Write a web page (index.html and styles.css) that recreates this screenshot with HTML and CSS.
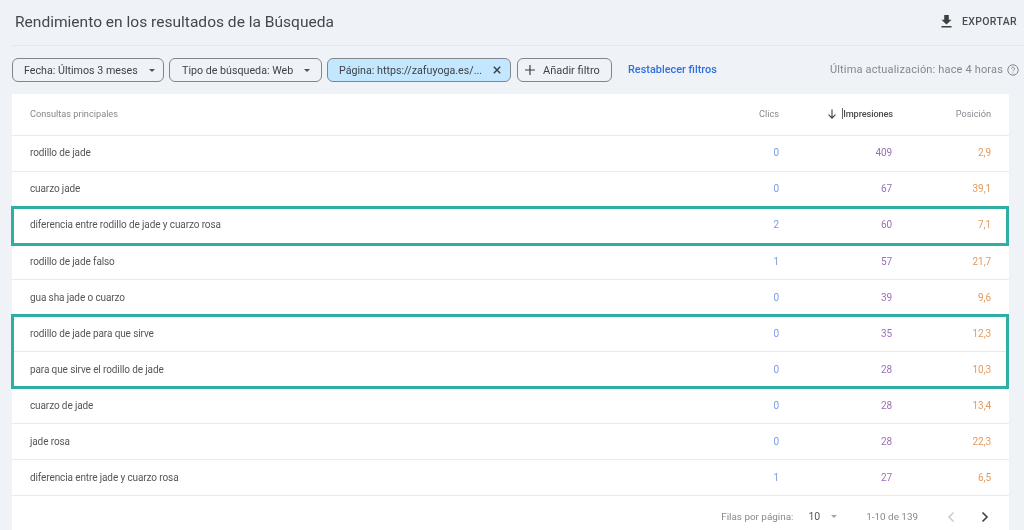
FILE: index.html
```html
<!DOCTYPE html>
<html lang="es">
<head>
<meta charset="utf-8">
<title>Rendimiento en los resultados de la Búsqueda</title>
<link rel="stylesheet" href="styles.css">
</head>
<body>
<div class="page">
<header class="topbar">
  <h1 class="title">Rendimiento en los resultados de la Búsqueda</h1>
  <div class="export">
    <svg class="export-icon" viewBox="0 0 12 14" width="11" height="13"><path d="M3.500 0h5v5h3L6 10.300.5 5h3zM.5 12h11v1.500H.5z" fill="#3c4043"/></svg>
    <span>EXPORTAR</span>
  </div>
</header>
<section class="filters">
  <div class="chip chip-fecha">Fecha: Últimos 3 meses<span class="caret"></span></div>
  <div class="chip chip-tipo">Tipo de búsqueda: Web<span class="caret"></span></div>
  <div class="chip chip-active">Página: https://zafuyoga.es/...
    <svg class="close" viewBox="0 0 10 10" width="8" height="8"><path d="M1 1l8 8M9 1l-8 8" stroke="#3c4043" stroke-width="1.800" fill="none"/></svg>
  </div>
  <div class="chip chip-add">
    <svg viewBox="0 0 10 10" width="10" height="10"><path d="M5 0v10M0 5h10" stroke="#3c4043" stroke-width="1.200" fill="none"/></svg>
    Añadir filtro
  </div>
  <a class="reset">Restablecer filtros</a>
  <div class="updated">Última actualización: hace 4 horas
    <svg viewBox="0 0 12 12" width="12" height="12"><circle cx="6" cy="6" r="5.200" fill="none" stroke="#80868b" stroke-width="1"/><path d="M4.500 4.700a1.500 1.500 0 1 1 2.300 1.300c-.6.400-.8.700-.8 1.300" fill="none" stroke="#80868b" stroke-width="1"/><circle cx="6" cy="9" r=".6" fill="#80868b"/></svg>
  </div>
</section>
<main class="card">
  <div class="row head">
    <div class="cell-q">Consultas principales</div>
    <div class="num">Clics</div>
    <div class="num sorted"><svg viewBox="0 0 8 10" width="8" height="10"><path d="M4 .5v8.500M.6 5.600L4 9.100l3.400-3.500" stroke="#3c4043" stroke-width="1.100" fill="none"/></svg><span class="caret-line">Impresiones</span></div>
    <div class="num">Posición</div>
  </div>
  <div class="row"><div class="cell-q">rodillo de jade</div><div class="num c">0</div><div class="num i">409</div><div class="num p">2,9</div></div>
  <div class="row"><div class="cell-q">cuarzo jade</div><div class="num c">0</div><div class="num i">67</div><div class="num p">39,1</div></div>
  <div class="row"><div class="cell-q">diferencia entre rodillo de jade y cuarzo rosa</div><div class="num c">2</div><div class="num i">60</div><div class="num p">7,1</div></div>
  <div class="row"><div class="cell-q">rodillo de jade falso</div><div class="num c">1</div><div class="num i">57</div><div class="num p">21,7</div></div>
  <div class="row"><div class="cell-q">gua sha jade o cuarzo</div><div class="num c">0</div><div class="num i">39</div><div class="num p">9,6</div></div>
  <div class="row"><div class="cell-q">rodillo de jade para que sirve</div><div class="num c">0</div><div class="num i">35</div><div class="num p">12,3</div></div>
  <div class="row"><div class="cell-q">para que sirve el rodillo de jade</div><div class="num c">0</div><div class="num i">28</div><div class="num p">10,3</div></div>
  <div class="row"><div class="cell-q">cuarzo de jade</div><div class="num c">0</div><div class="num i">28</div><div class="num p">13,4</div></div>
  <div class="row"><div class="cell-q">jade rosa</div><div class="num c">0</div><div class="num i">28</div><div class="num p">22,3</div></div>
  <div class="row"><div class="cell-q">diferencia entre jade y cuarzo rosa</div><div class="num c">1</div><div class="num i">27</div><div class="num p">6,5</div></div>
  <footer class="pager">
    <span>Filas por página:</span>
    <span class="size">10</span>
    <span class="caret caret-light"></span>
    <span class="range">1-10 de 139</span>
    <svg class="prev" viewBox="0 0 8 12" width="8" height="12"><path d="M6.500 1.500L2 6l4.500 4.500" stroke="#c4c7ca" stroke-width="1.400" fill="none"/></svg>
    <svg class="next" viewBox="0 0 8 12" width="8" height="12"><path d="M1.500 1.500L6 6l-4.500 4.500" stroke="#3c4043" stroke-width="1.600" fill="none"/></svg>
  </footer>
</main>
<div class="mark mark-one"></div>
<div class="mark mark-two"></div>
</div>
</body>
</html>
```
FILE: styles.css
```css
* { box-sizing: border-box; }
html, body { margin: 0; height: 530px; overflow: hidden; }
body {
  background: #eff3f8;
  font-family: Roboto, "Liberation Sans", sans-serif;
  color: #3c4043;
}
.page {
  position: relative;
  height: 530px;
  filter: blur(.3px);
}
.topbar {
  height: 46px;
  margin-left: 12px;
  padding: 0 7px 2px 3px;
  display: flex;
  align-items: center;
  justify-content: space-between;
  border-bottom: 1px solid #e4e7eb;
}
.title {
  margin: 0;
  font-size: 15.550px;
  font-weight: 400;
  color: #44484c;
}
.export {
  display: flex;
  align-items: center;
  gap: 10px;
  font-size: 10.500px;
  font-weight: 500;
  letter-spacing: .35px;
  color: #4a4d50;
}
.filters {
  height: 48px;
  padding: 12px 5px 0 12px;
  display: flex;
  align-items: flex-start;
  font-size: 10.700px;
  font-weight: 400;
  color: #3f4347;
}
.chip {
  height: 24px;
  border: 1px solid #80868b;
  border-radius: 6px;
  display: flex;
  align-items: center;
  white-space: nowrap;
}
.chip-fecha { width: 152px; padding-left: 11px; margin-right: 5px; }
.chip-tipo { width: 153px; padding-left: 12px; margin-right: 5px; }
.chip-active {
  width: 184px;
  padding-left: 11px;
  margin-right: 6px;
  background: #c2e7ff;
  justify-content: space-between;
  padding-right: 9px;
}
.chip-add {
  width: 95px;
  padding-left: 7px;
  gap: 8px;
  margin-right: 16px;
  font-size: 11px;
}
.caret {
  width: 0;
  height: 0;
  margin-left: 11px;
  border-left: 3px solid transparent;
  border-right: 3px solid transparent;
  border-top: 3px solid #4f5357;
}
.reset {
  line-height: 24px;
  color: #2f6fe0;
  font-weight: 500;
  font-size: 10.900px;
}
.updated {
  margin-left: auto;
  line-height: 24px;
  display: flex;
  align-items: center;
  gap: 4px;
  font-size: 11px;
  font-weight: 400;
  letter-spacing: .16px;
  color: #85898d;
}
.card {
  width: 997px;
  height: 436px;
  margin-left: 12px;
  background: #fff;
  font-size: 10px;
  letter-spacing: -.11px;
}
.row {
  height: 36.100px;
  display: grid;
  grid-template-columns: 1fr 90px 113px 99px;
  padding: 0 18px .6px;
  align-items: center;
  border-bottom: 1px solid #e8eaed;
  color: #53575b;
}
.head {
  height: 41.500px;
  padding-bottom: 1px;
  font-size: 9.200px;
  letter-spacing: 0;
  color: #85898d;
}
.num { text-align: right; }
.sorted {
  font-size: 9.200px;
  letter-spacing: -.1px;
  color: #4a4d50;
  font-weight: 500;
  display: flex;
  justify-content: flex-end;
  align-items: center;
  gap: 7px;
}
.caret-line { border-left: 1px solid #5f6368; margin: 0 -1px 0 -1px; }
.c { color: #7c9be4; }
.i { color: #9a6fb8; }
.p { color: #e39a5f; }
.pager {
  height: 33px;
  padding: 8px 20px 0 0;
  display: flex;
  align-items: center;
  justify-content: flex-end;
  font-size: 9.900px;
  letter-spacing: 0;
  color: #85898d;
}
.size { margin-left: 15px; color: #53575b; font-size: 10.500px; }
.caret-light { margin-left: 11px; border-top-color: #a3a6a9; }
.range { margin-left: 29px; }
.prev { margin-left: 29px; }
.next { margin-left: 26px; }
.mark {
  position: absolute;
  left: 11px;
  width: 997.500px;
  border: 3px solid #2fafa4;
  pointer-events: none;
}
.mark-one { top: 206px; height: 40px; }
.mark-two { top: 314px; height: 75px; }
```
